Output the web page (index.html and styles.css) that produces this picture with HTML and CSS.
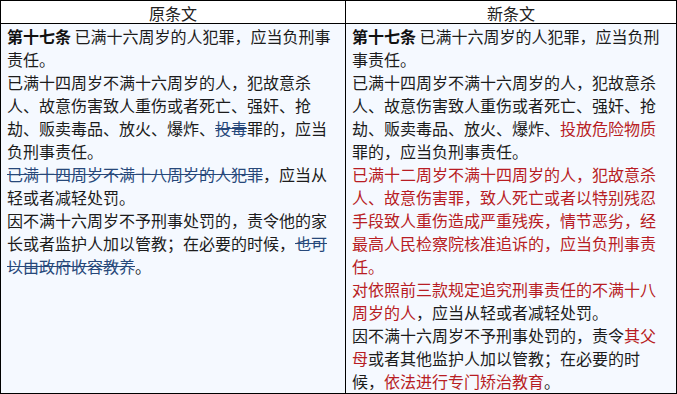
FILE: index.html
```html
<!DOCTYPE html>
<html lang="zh-CN">
<head>
<meta charset="utf-8">
<link rel="stylesheet" href="styles.css">
</head>
<body>
<div class="compare">
  <div class="head">原条文</div>
  <div class="head">新条文</div>
  <div class="cell">
    <p><b>第十七条</b> 已满十六周岁的人犯罪，应当负刑事责任。</p>
    <p>已满十四周岁不满十六周岁的人，犯故意杀人、故意伤害致人重伤或者死亡、强奸、抢劫、贩卖毒品、放火、爆炸、<del>投毒</del>罪的，应当负刑事责任。</p>
    <p><del>已满十四周岁不满十八周岁的人犯罪</del>，应当从轻或者减轻处罚。</p>
    <p>因不满十六周岁不予刑事处罚的，责令他的家长或者监护人加以管教；在必要的时候，<del>也可以由政府收容教养</del>。</p>
  </div>
  <div class="cell">
    <p><b>第十七条</b> 已满十六周岁的人犯罪，应当负刑事责任。</p>
    <p>已满十四周岁不满十六周岁的人，犯故意杀人、故意伤害致人重伤或者死亡、强奸、抢劫、贩卖毒品、放火、爆炸、<span class="add">投放危险物质</span>罪的，应当负刑事责任。</p>
    <p class="add">已满十二周岁不满十四周岁的人，犯故意杀人、故意伤害罪，致人死亡或者以特别残忍手段致人重伤造成严重残疾，情节恶劣，经最高人民检察院核准追诉的，应当负刑事责任。</p>
    <p><span class="add">对依照前三款规定追究刑事责任的不满十八周岁的人</span>，应当从轻或者减轻处罚。</p>
    <p>因不满十六周岁不予刑事处罚的，责令<span class="add">其父母</span>或者其他监护人加以管教；在必要的时候，<span class="add">依法进行专门矫治教育</span>。</p>
  </div>
</div>
</body>
</html>
```

FILE: styles.css
```css
html, body {
  margin: 0;
  padding: 0;
  background: #ffffff;
}

.compare {
  display: grid;
  grid-template-columns: 344px 330px;
  grid-template-rows: 22px 369px;
  gap: 1px;
  padding: 1px;
  width: 677px;
  height: 394px;
  box-sizing: border-box;
  background: #000000;
  font-family: "Noto Sans CJK SC", "Noto Sans", sans-serif;
  font-size: 16px;
  color: #1c1c1c;
}

.head {
  background: #ffffff;
  text-align: center;
  line-height: 22px;
  padding-top: 1px;
  box-sizing: border-box;
  color: #222222;
}

.cell {
  background: #f5f9ff;
  padding: 1px 6px 0 6px;
  line-height: 23px;
}

.cell p {
  margin: 0;
}

.cell b {
  font-weight: 700;
  color: #111111;
}

del {
  color: #27487a;
  text-decoration: line-through;
  text-decoration-color: #27487a;
}

.add {
  color: #b81d24;
}
```
